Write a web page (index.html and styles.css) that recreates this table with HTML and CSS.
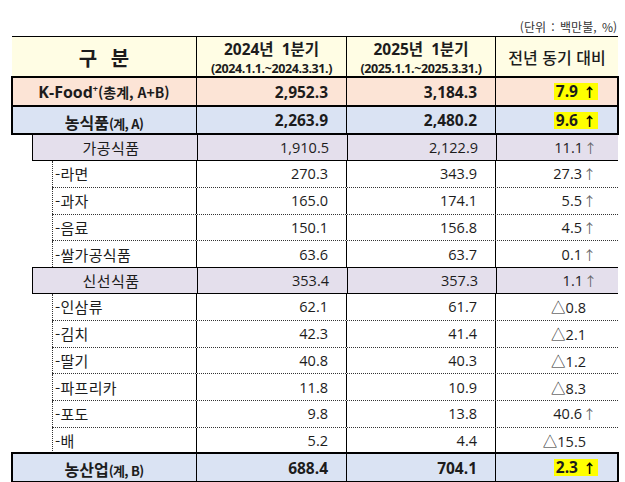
FILE: index.html
```html
<!DOCTYPE html>
<html lang="ko">
<head>
<meta charset="utf-8">
<title>K-Food 수출 실적</title>
<link rel="stylesheet" href="styles.css">
</head>
<body>
<div class="sheet">
  <div class="unit">(단위 : 백만불, %)</div>
  <div class="tbl">
    <div class="row head">
      <div class="c hc1">구&nbsp;분</div>
      <div class="c hc"><span class="hy">2024년&nbsp;&nbsp;1분기</span><span class="hd">(2024.1.1.~2024.3.31.)</span></div>
      <div class="c hc"><span class="hy">2025년&nbsp;&nbsp;1분기</span><span class="hd">(2025.1.1.~2025.3.31.)</span></div>
      <div class="c hc hc4">전년 동기 대비</div>
    </div>

    <div class="row tot kfood">
      <div class="c lab"><span class="big">K-Food<sup>+</sup></span><span class="sm wide">(총계, A+B)</span></div>
      <div class="c num">2,952.3</div>
      <div class="c num">3,184.3</div>
      <div class="c pct"><span class="hl">7.9 <span class="ar">↑</span></span></div>
    </div>
    <div class="row tot agri">
      <div class="c lab"><span class="big">농식품</span><span class="sm">(계, A)</span></div>
      <div class="c num">2,263.9</div>
      <div class="c num">2,480.2</div>
      <div class="c pct"><span class="hl">9.6 <span class="ar">↑</span></span></div>
    </div>

    <div class="row grp">
      <div class="c glab">가공식품</div>
      <div class="c num">1,910.5</div>
      <div class="c num">2,122.9</div>
      <div class="c pct">11.1<span class="ar">↑</span></div>
    </div>
    <div class="row item">
      <div class="c ilab">-라면</div>
      <div class="c num">270.3</div>
      <div class="c num">343.9</div>
      <div class="c pct">27.3<span class="ar">↑</span></div>
    </div>
    <div class="row item">
      <div class="c ilab">-과자</div>
      <div class="c num">165.0</div>
      <div class="c num">174.1</div>
      <div class="c pct">5.5<span class="ar">↑</span></div>
    </div>
    <div class="row item">
      <div class="c ilab">-음료</div>
      <div class="c num">150.1</div>
      <div class="c num">156.8</div>
      <div class="c pct">4.5<span class="ar">↑</span></div>
    </div>
    <div class="row item">
      <div class="c ilab">-쌀가공식품</div>
      <div class="c num">63.6</div>
      <div class="c num">63.7</div>
      <div class="c pct">0.1<span class="ar">↑</span></div>
    </div>

    <div class="row grp">
      <div class="c glab">신선식품</div>
      <div class="c num">353.4</div>
      <div class="c num">357.3</div>
      <div class="c pct">1.1<span class="ar">↑</span></div>
    </div>
    <div class="row item">
      <div class="c ilab">-인삼류</div>
      <div class="c num">62.1</div>
      <div class="c num">61.7</div>
      <div class="c pct dn">△0.8</div>
    </div>
    <div class="row item">
      <div class="c ilab">-김치</div>
      <div class="c num">42.3</div>
      <div class="c num">41.4</div>
      <div class="c pct dn">△2.1</div>
    </div>
    <div class="row item">
      <div class="c ilab">-딸기</div>
      <div class="c num">40.8</div>
      <div class="c num">40.3</div>
      <div class="c pct dn">△1.2</div>
    </div>
    <div class="row item">
      <div class="c ilab">-파프리카</div>
      <div class="c num">11.8</div>
      <div class="c num">10.9</div>
      <div class="c pct dn">△8.3</div>
    </div>
    <div class="row item">
      <div class="c ilab">-포도</div>
      <div class="c num">9.8</div>
      <div class="c num">13.8</div>
      <div class="c pct">40.6<span class="ar">↑</span></div>
    </div>
    <div class="row item">
      <div class="c ilab">-배</div>
      <div class="c num">5.2</div>
      <div class="c num">4.4</div>
      <div class="c pct dn">△15.5</div>
    </div>

    <div class="row tot agri last">
      <div class="c lab"><span class="big">농산업</span><span class="sm">(계, B)</span></div>
      <div class="c num">688.4</div>
      <div class="c num">704.1</div>
      <div class="c pct"><span class="hl">2.3 <span class="ar">↑</span></span></div>
    </div>
  </div>
</div>
</body>
</html>
```

FILE: styles.css
```css
* { box-sizing: border-box; }

body {
  margin: 0;
  background: #fff;
  color: #1c1c1c;
  font-family: "Open Sans", "Noto Sans CJK KR", sans-serif;
}

.sheet {
  width: 618px;
  padding: 18px 0 0 12px;
}

.unit {
  height: 18px;
  line-height: 18px;
  font-size: 12px;
  text-align: right;
  color: #333;
  padding-right: 1px;
  word-spacing: 2px;
  font-family: "Noto Sans CJK KR", sans-serif;
}

.row {
  display: grid;
  grid-template-columns: 185px 150px 149px 122px;
  height: 26.6px;
}

.c {
  display: flex;
  align-items: center;
  border-right: 1px solid #000;
  white-space: nowrap;
  overflow: visible;
}
.c:last-child { border-right: 0; }

/* header */
.head {
  height: 41px;
  border-top: 1px solid #000;
  background: #fffde4;
}
.hc1 {
  justify-content: center;
  font-family: "Noto Sans CJK KR", sans-serif;
  font-weight: 700;
  font-size: 20px;
  letter-spacing: 4px;
  padding-left: 4px;
}
.hc {
  flex-direction: column;
  justify-content: center;
  font-weight: 700;
}
.hy {
  font-size: 15.5px;
  line-height: 21px;
  padding-top: 1px;
}
.hd {
  font-size: 12.5px;
  line-height: 17px;
  letter-spacing: -0.4px;
}
.hc4 {
  font-weight: 500;
  font-size: 16px;
  font-family: "Noto Sans CJK KR", sans-serif;
}

/* bold total rows */
.tot {
  font-weight: 700;
  outline: 2px solid #000;
  outline-offset: -1px;
}
.kfood { height: 29px; background: #fce4d6; }
.agri { height: 28px; background: #dae3f3; }
.lab {
  justify-content: center;
  align-items: baseline;
  padding-top: 4px;
}
.big { font-size: 16px; }
.big sup { font-size: 9px; vertical-align: 6px; }
.sm {
  font-size: 13px;
  letter-spacing: -0.6px;
  font-family: "Noto Sans CJK KR", sans-serif;
}
.sm.wide {
  font-size: 14px;
  letter-spacing: 0;
}

.num {
  justify-content: flex-end;
  padding-right: 18px;
  font-size: 14.5px;
}
.tot .num { font-size: 15.5px; }

.pct {
  justify-content: flex-end;
  padding-right: 22px;
  font-size: 14.5px;
}
.pct.dn { padding-right: 32px; }
.ar {
  color: #666;
  font-family: "Noto Sans CJK KR", sans-serif;
  font-size: 13px;
  margin-left: 1px;
}
.tot .pct { font-size: 15.5px; padding-right: 20px; }
.tot .ar { color: #000; font-weight: 700; }
.hl {
  background: #ffff00;
  padding: 0 2px;
  line-height: 17px;
}

/* group rows */
.grp {
  margin-left: 20px;
  grid-template-columns: 165px 150px 149px 122px;
  background: #e4dfec;
  border-top: 1px solid #000;
  border-bottom: 1px solid #000;
  border-left: 1px solid #000;
}
.glab {
  justify-content: center;
  padding-right: 8px;
  font-size: 15px;
  letter-spacing: 0.5px;
  font-family: "Noto Sans CJK KR", sans-serif;
}

/* item rows */
.item {
  margin-left: 40px;
  grid-template-columns: 145px 150px 149px 122px;
  border-top: 1px dotted #333;
}
.grp + .item { border-top: 0; }
.ilab {
  border-left: 1px dotted #333;
  padding-left: 2px;
  font-size: 15px;
  letter-spacing: 0.3px;
  font-family: "Noto Sans CJK KR", sans-serif;
}

.last { height: 29px; }
```
